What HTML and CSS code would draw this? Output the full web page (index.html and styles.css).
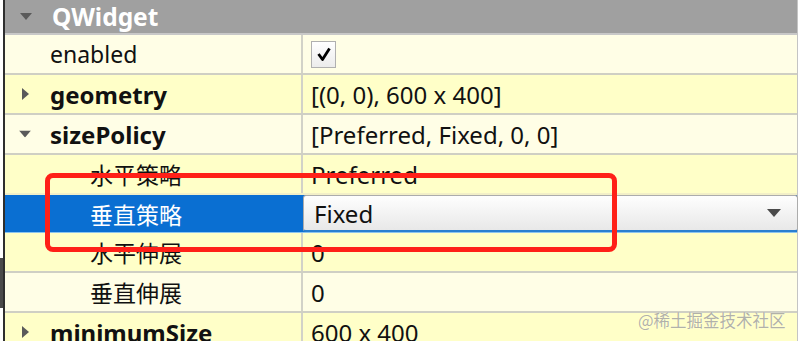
FILE: index.html
```html
<!DOCTYPE html>
<html lang="zh-CN">
<head>
  <meta charset="UTF-8">
  <title>Property Editor</title>
  <link rel="stylesheet" href="styles.css">
</head>
<body>
  <div class="screen">
    <div class="edge">
      <div class="edge-mark"></div>
    </div>

    <div class="editor">
      <div class="group-header">
        <svg class="arrow" width="12" height="7" viewBox="0 0 12 7"><path d="M0 0H12L6 7Z" fill="#5a5a5a"/></svg>
        <span class="group-title">QWidget</span>
      </div>

      <div class="row light">
        <div class="name"><span class="label">enabled</span></div>
        <div class="value">
          <span class="checkbox">
            <svg width="16" height="16" viewBox="0 0 16 16"><path d="M2.5 8L6.5 13.5L13.5 2.5" fill="none" stroke="#000" stroke-width="2.8" stroke-linejoin="round"/></svg>
          </span>
        </div>
      </div>

      <div class="row yellow">
        <div class="name">
          <svg class="arrow right" width="7" height="12" viewBox="0 0 7 12"><path d="M0 0V12L7 6Z" fill="#5a5a5a"/></svg>
          <span class="label bold">geometry</span>
        </div>
        <div class="value">[(0, 0), 600 x 400]</div>
      </div>

      <div class="row light">
        <div class="name">
          <svg class="arrow" width="12" height="7" viewBox="0 0 12 7"><path d="M0 0H12L6 7Z" fill="#5a5a5a"/></svg>
          <span class="label bold">sizePolicy</span>
        </div>
        <div class="value">[Preferred, Fixed, 0, 0]</div>
      </div>

      <div class="row yellow">
        <div class="name child"><span class="label">水平策略</span></div>
        <div class="value">Preferred</div>
      </div>

      <div class="row selected">
        <div class="name child"><span class="label">垂直策略</span></div>
        <div class="value combo-cell">
          <div class="combo">
            <span>Fixed</span>
            <svg width="14" height="8" viewBox="0 0 14 8"><path d="M0 0H14L7 8Z" fill="#4a4a4a"/></svg>
          </div>
        </div>
      </div>

      <div class="row yellow">
        <div class="name child"><span class="label">水平伸展</span></div>
        <div class="value">0</div>
      </div>

      <div class="row light">
        <div class="name child"><span class="label">垂直伸展</span></div>
        <div class="value">0</div>
      </div>

      <div class="row yellow">
        <div class="name">
          <svg class="arrow right" width="7" height="12" viewBox="0 0 7 12"><path d="M0 0V12L7 6Z" fill="#5a5a5a"/></svg>
          <span class="label bold">minimumSize</span>
        </div>
        <div class="value">600 x 400</div>
      </div>
    </div>

    <div class="highlight"></div>
    <div class="watermark">@稀土掘金技术社区</div>
  </div>
</body>
</html>
```

FILE: styles.css
```css
body {
  margin: 0;
  background: #ffffff;
  font-family: "Noto Sans", "Noto Sans CJK SC", sans-serif;
  font-size: 24px;
  color: #111;
  overflow: hidden;
}

.screen {
  position: relative;
  display: flex;
  width: 801px;
  height: 341px;
  overflow: hidden;
}

.edge {
  width: 3px;
  flex: none;
}

.edge-mark {
  margin-top: 258px;
  height: 50px;
  background: #4a4a4a;
}

.editor {
  width: 792px;
  flex: none;
  border-left: 2px solid #2e2e2e;
  border-right: 1px solid #c4c4c4;
}

.group-header {
  height: 33px;
  display: flex;
  align-items: center;
  background: #a0a0a0;
  border-bottom: 2px solid #c8c8c8;
  padding-left: 15px;
}

.group-header .arrow {
  margin-right: 20px;
}

.group-title {
  color: #ffffff;
  font-weight: 700;
  font-size: 24.5px;
}

.row {
  display: grid;
  grid-template-columns: 298px 1fr;
  height: 38px;
  border-bottom: 2px solid #cfcfc4;
}

.row.light {
  background: #fffee6;
}

.row.yellow {
  background: #ffffc8;
}

.name {
  display: flex;
  align-items: center;
  padding-left: 45px;
  border-right: 2px solid #d2d2c8;
  position: relative;
}

.name .arrow {
  position: absolute;
  left: 14px;
  top: 50%;
  transform: translateY(-50%);
}

.name .arrow.right {
  left: 17px;
}

.name.child {
  padding-left: 85px;
}

.label {
  font-size: 23px;
}

.label.bold {
  font-weight: 700;
  font-size: 24px;
}

.value {
  display: flex;
  align-items: center;
  padding-left: 8px;
}

.checkbox {
  width: 23px;
  height: 25px;
  border: 1px solid #b0b0b0;
  background: linear-gradient(#ffffff, #ececec);
  display: flex;
  align-items: center;
  justify-content: center;
}

.row.selected {
  background: #0a6fd2;
  border-top: 2px solid #f2efc8;
  height: 37px;
  margin-top: -2px;
  border-bottom: 1px solid #8cc4ee;
}

.row.selected .name {
  color: #ffffff;
  border-right: none;
}

.combo-cell {
  padding-left: 0;
  align-items: stretch;
}

.combo {
  flex: 1;
  display: flex;
  align-items: center;
  justify-content: space-between;
  padding: 0 16px 0 10px;
  background: linear-gradient(#fefefe, #e8e8e8);
  border: 1px solid #acacac;
  border-bottom: 2px solid #2a7fd0;
  border-radius: 3px;
  margin-right: -1px;
  color: #111;
}

.highlight {
  position: absolute;
  left: 45px;
  top: 173px;
  width: 562px;
  height: 69px;
  border: 5px solid #ff2018;
  border-radius: 8px;
}

.watermark {
  position: absolute;
  left: 638px;
  top: 308px;
  font-family: "Noto Sans CJK SC", sans-serif;
  font-size: 16.5px;
  color: rgba(110, 110, 110, 0.55);
  text-shadow: 0 0 1px rgba(255, 255, 255, 0.8);
}
```
